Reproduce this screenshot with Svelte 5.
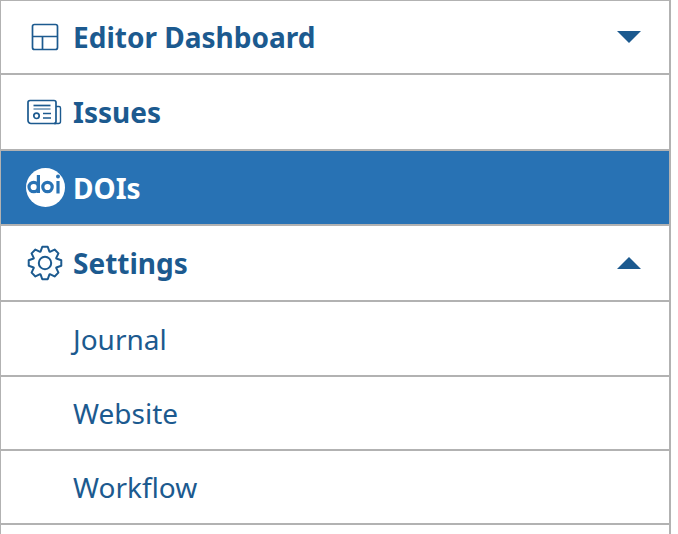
<script>
  let items = [
    { label: "Editor Dashboard", icon: "layout", caret: "down", h: 72 },
    { label: "Issues", icon: "news", h: 74 },
    { label: "DOIs", icon: "doi", active: true, h: 73 },
    { label: "Settings", icon: "gear", caret: "up", h: 74 },
    { label: "Journal", sub: true, h: 73 },
    { label: "Website", sub: true, h: 72 },
    { label: "Workflow", sub: true, h: 72 },
    { label: "", sub: true, h: 72 },
  ];

  // Шестерня: 8 зубьев по кругу
  function gearPath(cx, cy, outer, inner) {
    let pts = [];
    for (let i = 0; i < 8; i++) {
      let a = (i * Math.PI) / 4 - Math.PI / 2;
      let step = Math.PI / 8;
      pts.push([a - step * 0.95, inner]);
      pts.push([a - step * 0.42, outer]);
      pts.push([a + step * 0.42, outer]);
      pts.push([a + step * 0.95, inner]);
    }
    let d = pts.map(([a, r], i) => {
      let x = (cx + r * Math.cos(a)).toFixed(2);
      let y = (cy + r * Math.sin(a)).toFixed(2);
      return (i ? "L" : "M") + x + " " + y;
    });
    return d.join(" ") + "Z";
  }
</script>

<nav class="menu">
  {#each items as item}
    <div class="row" class:active={item.active} class:sub={item.sub} style="height: {item.h}px">
      {#if item.icon}
        <span class="icon">
          {#if item.icon === "layout"}
            <svg width="28" height="28" viewBox="0 0 28 28" fill="none" stroke="currentColor" stroke-width="1.7">
              <rect x="1.500" y="1.500" width="25" height="25" rx="2" />
              <path d="M1.500 13.500h25M11.500 13.500v13" />
            </svg>
          {:else if item.icon === "news"}
            <svg width="36" height="26" viewBox="0 0 36 26" fill="none" stroke="currentColor" stroke-width="1.700">
              <path d="M29 24.500H4a3 3 0 0 1-3-3V3.500a2 2 0 0 1 2-2h24a2 2 0 0 1 2 2V22.500a2 2 0 0 1-2 2Z" />
              <path d="M29 7.500h3a1.500 1.500 0 0 1 1.500 1.500v13.500a2 2 0 0 1-2 2h-4.500" stroke-width="1.400" />
              <path d="M6.500 6.500h17" />
              <path d="M6.500 10h17" stroke-width="1" />
              <path d="M16 14.500h8M16 19h8" />
              <circle cx="9.500" cy="16.800" r="2.700" />
            </svg>
          {:else if item.icon === "doi"}
            <svg width="39" height="39" viewBox="0 0 39 39">
              <circle cx="19.500" cy="19.500" r="19.500" fill="#fff" />
              <g fill="none" stroke="#2872b4" stroke-width="3.200">
                <circle cx="7.700" cy="19" r="4.700" />
                <path d="M12.400 7v18" />
                <circle cx="21.500" cy="19" r="4.700" />
                <path d="M32 13v12.500" />
              </g>
              <circle cx="32" cy="8.500" r="2" fill="#2872b4" />
            </svg>
          {:else}
            <svg width="36" height="36" viewBox="0 0 36 36" fill="none" stroke="currentColor" stroke-width="2" stroke-linejoin="round">
              <circle cx="18" cy="18" r="6.200" />
              <path d={gearPath(18, 18, 16.500, 12.200)} />
            </svg>
          {/if}
        </span>
      {/if}
      <span class="label">{item.label}</span>
      {#if item.caret}
        <span class="caret {item.caret}"></span>
      {/if}
    </div>
  {/each}
</nav>

<style>
  :global(body) {
    margin: 0;
    background: #fff;
  }
  .menu {
    width: 668px;
    height: 534px;
    overflow: hidden;
    border-top: 1px solid #b2b2b2;
    border-left: 1px solid #b2b2b2;
    border-right: 2px solid #b2b2b2;
    box-sizing: content-box;
    font-family: "Noto Sans", sans-serif;
    color: #1c5a8f;
  }
  .row {
    display: flex;
    align-items: center;
    border-bottom: 2px solid #b2b2b2;
    font-size: 28px;
    font-weight: 700;
  }
  .active {
    background: #2872b4;
    color: #fff;
  }
  .sub {
    font-weight: 400;
    padding-left: 72px;
  }
  .icon {
    width: 72px;
    display: flex;
    justify-content: center;
    flex: none;
    padding-left: 16px;
    box-sizing: border-box;
  }
  .label {
    flex: 1;
  }
  .caret {
    width: 0;
    height: 0;
    margin-right: 28px;
    border-left: 12px solid transparent;
    border-right: 12px solid transparent;
  }
  .caret.down {
    border-top: 12px solid #1c5a8f;
  }
  .caret.up {
    border-bottom: 12px solid #1c5a8f;
  }
</style>
